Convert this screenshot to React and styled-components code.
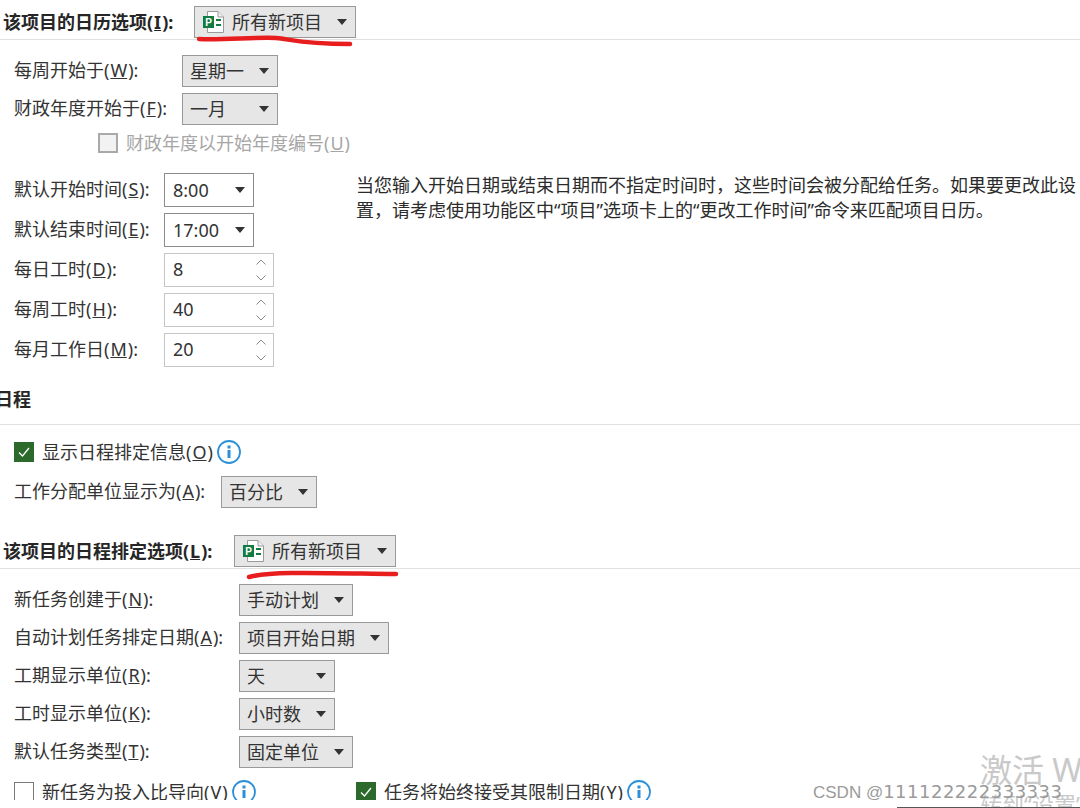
import React from 'react'
import styled, { createGlobalStyle } from 'styled-components'

const GlobalStyle = createGlobalStyle`
  html, body {
    margin: 0;
    padding: 0;
    background: #fff;
  }
`

const Page = styled.div`
  position: relative;
  width: 1080px;
  height: 808px;
  overflow: hidden;
  background: #fff;
  color: #333;
  font-family: "Noto Sans", "Noto Sans CJK SC", sans-serif;
  font-size: 18px;
  line-height: 25px;
`

const Clip = styled.div`
  height: 800px;
  overflow: hidden;
`

const SectionHead = styled.div`
  display: flex;
  align-items: ${p => (p.$plain ? 'flex-start' : 'center')};
  margin-top: ${p => p.$top || 0}px;
  padding: 0 0 1px 3px;
  border-bottom: 1px solid #e1e1e1;
  min-height: ${p => (p.$plain ? 36 : 32)}px;
`

const HeadText = styled.div`
  width: ${p => p.$w}px;
  font-weight: 700;
  color: #262626;
  margin-left: ${p => p.$shift || 0}px;
`

const Key = styled.u`
  margin: 0 1px;
`

const Group = styled.div`
  display: grid;
  grid-template-columns: ${p => p.$label}px auto;
  justify-content: start;
  align-items: center;
  row-gap: 6px;
  margin-top: ${p => p.$top || 0}px;
  padding-left: 14px;
`

const Label = styled.div`
  white-space: nowrap;
  padding-bottom: 2px;
`

const Select = styled.div`
  display: flex;
  align-items: center;
  justify-content: space-between;
  box-sizing: border-box;
  width: ${p => p.$w}px;
  height: ${p => (p.$white ? 34 : 32)}px;
  padding: 0 8px;
  background: ${p => (p.$white ? '#fff' : '#e6e6e6')};
  border: 1px solid ${p => (p.$white ? '#8c8c8c' : '#999')};
  white-space: nowrap;
`

const SelectText = styled.span`
  margin-left: ${p => (p.$white ? 0 : -1)}px;
`

const Arrow = styled.span`
  flex: none;
  width: 0;
  height: 0;
  border-left: 5px solid transparent;
  border-right: 5px solid transparent;
  border-top: 6px solid #333;
`

const SelectValue = styled.span`
  display: flex;
  align-items: center;
  gap: 8px;
`

const Spin = styled.div`
  display: flex;
  align-items: center;
  justify-content: space-between;
  box-sizing: border-box;
  width: 110px;
  height: 34px;
  padding: 0 7px 0 8px;
  background: #fff;
  border: 1px solid #c6c6c6;
`

const SpinValue = styled.span`
  padding-bottom: 2px;
`

const SpinArrows = styled.span`
  display: flex;
  flex-direction: column;
  gap: 10px;
`

const CheckRow = styled.div`
  display: flex;
  align-items: center;
  height: 20px;
  margin-top: ${p => p.$top || 0}px;
  padding-left: ${p => p.$left || 0}px;
  color: ${p => (p.$disabled ? '#a6a6a6' : '#333')};
  white-space: nowrap;
`

const Check = styled.span`
  flex: none;
  display: flex;
  align-items: center;
  justify-content: center;
  box-sizing: border-box;
  width: 20px;
  height: 20px;
  margin-right: 8px;
  background: ${p => (p.$on ? '#2b6a2b' : p.$disabled ? '#f2f2f2' : '#fff')};
  border: ${p => (p.$on ? '0' : p.$disabled ? '2px solid #a9a9a9' : '1.5px solid #7a7a7a')};
`

const InfoWrap = styled.span`
  flex: none;
  display: flex;
  margin-left: 4px;
`

const TimeArea = styled.div`
  display: flex;
  margin-top: 20px;
`

const Note = styled.div`
  position: absolute;
  width: 724px;
  margin-left: 356px;
  color: #2b2b2b;
`

const BottomChecks = styled.div`
  display: flex;
  margin-top: 14px;
  padding-left: 14px;
`

const BottomCol = styled.div`
  width: 342px;
`

const Stroke = styled.svg`
  position: absolute;
  left: 0;
  top: 0;
  pointer-events: none;
`

const Activate = styled.div`
  position: absolute;
  left: 980px;
  top: 748px;
  font-size: 32px;
  line-height: 44px;
  color: #c9c9c9;
  white-space: nowrap;
`

const ActivateSub = styled.div`
  position: absolute;
  left: 980px;
  top: 790px;
  font-size: 22px;
  line-height: 28px;
  color: #c9c9c9;
  white-space: nowrap;
`

const Credit = styled.div`
  position: absolute;
  left: 813px;
  top: 780px;
  font-family: "Liberation Sans", sans-serif;
  font-size: 17px;
  line-height: 24px;
  color: #9a9a9a;
  white-space: nowrap;
`

const CreditDigits = styled.span`
  font-family: "DejaVu Sans", sans-serif;
  font-size: 18px;
  letter-spacing: 0.5px;
`

const BottomLine = styled.div`
  position: absolute;
  left: 897px;
  right: 0;
  bottom: 0;
  height: 1px;
  background: #555;
`

const ProjectIcon = () => (
  <svg width="21" height="22" viewBox="0 0 21 22">
    <path d="M4.5 .5H15L20.5 6V21.5H4.5Z" fill="#fff" stroke="#9a9a9a" />
    <path d="M15 .5V6H20.5" fill="#f1f1f1" stroke="#9a9a9a" />
    <rect x="0" y="5" width="11" height="12" fill="#107c41" />
    <text x="5.5" y="14.5" fontSize="10" fontWeight="700" fill="#fff" textAnchor="middle" fontFamily="Liberation Sans">P</text>
    <rect x="13" y="8" width="5" height="2" fill="#107c41" />
    <rect x="13" y="13" width="5" height="2" fill="#107c41" />
  </svg>
)

const Tick = () => (
  <svg width="14" height="12" viewBox="0 0 14 12">
    <path d="M2 6.5 5.5 10 12 2" fill="none" stroke="#fff" strokeWidth="1.3" />
  </svg>
)

const Info = () => (
  <svg width="24" height="24" viewBox="0 0 24 24">
    <circle cx="12" cy="12" r="11" fill="#fff" stroke="#2b90d9" strokeWidth="1.8" />
    <rect x="10.5" y="10" width="3" height="8" fill="#2b90d9" />
    <rect x="10.5" y="5.5" width="3" height="3" fill="#2b90d9" />
  </svg>
)

const Chevron = ({ up }) => (
  <svg width="10" height="6" viewBox="0 0 10 6">
    <path d={up ? 'M.5 5.5 5 1l4.5 4.5' : 'M.5 .5 5 5l4.5-4.5'} fill="none" stroke="#888" />
  </svg>
)

const SpinField = ({ value }) => (
  <Spin>
    <SpinValue>{value}</SpinValue>
    <SpinArrows>
      <Chevron up />
      <Chevron />
    </SpinArrows>
  </Spin>
)

const ComboBox = ({ w, white, children }) => (
  <Select $w={w} $white={white}>
    <SelectText $white={white}>{children}</SelectText>
    <Arrow />
  </Select>
)

const ProjectSelect = () => (
  <Select $w={162}>
    <SelectValue>
      <ProjectIcon />
      所有新项目
    </SelectValue>
    <Arrow />
  </Select>
)

const scheduleRows = [
  ['新任务创建于(', 'N', '):', '手动计划', 114],
  ['自动计划任务排定日期(', 'A', '):', '项目开始日期', 150],
  ['工期显示单位(', 'R', '):', '天', 96],
  ['工时显示单位(', 'K', '):', '小时数', 96],
  ['默认任务类型(', 'T', '):', '固定单位', 114],
]

const spinRows = [
  ['每日工时(', 'D', '):', '8'],
  ['每周工时(', 'H', '):', '40'],
  ['每月工作日(', 'M', '):', '20'],
]

export default function App() {
  return (
    <Page lang="zh-CN">
      <GlobalStyle />
      <Clip>
        <SectionHead style={{ paddingTop: 6 }}>
          <HeadText $w={191}>该项目的日历选项(<Key>I</Key>):</HeadText>
          <ProjectSelect />
        </SectionHead>

        <Group $label={168} $top={15}>
          <Label>每周开始于(<Key>W</Key>):</Label>
          <ComboBox w={96}>星期一</ComboBox>
          <Label>财政年度开始于(<Key>F</Key>):</Label>
          <ComboBox w={96}>一月</ComboBox>
        </Group>
        <CheckRow $top={8} $left={98} $disabled>
          <Check $disabled />
          财政年度以开始年度编号(<Key>U</Key>)
        </CheckRow>

        <TimeArea>
          <Note>
            当您输入开始日期或结束日期而不指定时间时，这些时间会被分配给任务。如果要更改此设置，请考虑使用功能区中“项目”选项卡上的“更改工作时间”命令来匹配项目日历。
          </Note>
          <Group $label={150}>
            <Label>默认开始时间(<Key>S</Key>):</Label>
            <ComboBox w={90} white>8:00</ComboBox>
            <Label>默认结束时间(<Key>E</Key>):</Label>
            <ComboBox w={90} white>17:00</ComboBox>
            {spinRows.map(([a, key, b, value]) => (
              <React.Fragment key={key}>
                <Label>{a}<Key>{key}</Key>{b}</Label>
                <SpinField value={value} />
              </React.Fragment>
            ))}
          </Group>
        </TimeArea>

        <SectionHead $top={20} $plain>
          <HeadText $shift={-8}>日程</HeadText>
        </SectionHead>
        <CheckRow $top={17} $left={14}>
          <Check $on><Tick /></Check>
          显示日程排定信息(<Key>O</Key>)
          <InfoWrap><Info /></InfoWrap>
        </CheckRow>
        <Group $label={207} $top={14}>
          <Label>工作分配单位显示为(<Key>A</Key>):</Label>
          <ComboBox w={96}>百分比</ComboBox>
        </Group>

        <SectionHead $top={27}>
          <HeadText $w={231}>该项目的日程排定选项(<Key>L</Key>):</HeadText>
          <ProjectSelect />
        </SectionHead>
        <Group $label={225} $top={15}>
          {scheduleRows.map(([a, key, b, value, w]) => (
            <React.Fragment key={key}>
              <Label>{a}<Key>{key}</Key>{b}</Label>
              <ComboBox w={w}>{value}</ComboBox>
            </React.Fragment>
          ))}
        </Group>
        <BottomChecks>
          <BottomCol>
            <CheckRow>
              <Check />
              新任务为投入比导向(<Key>V</Key>)
              <InfoWrap><Info /></InfoWrap>
            </CheckRow>
          </BottomCol>
          <CheckRow>
            <Check $on><Tick /></Check>
            任务将始终接受其限制日期(<Key>Y</Key>)
            <InfoWrap><Info /></InfoWrap>
          </CheckRow>
        </BottomChecks>
      </Clip>

      <Stroke width="1080" height="808" viewBox="0 0 1080 808">
        <path d="M199 39C225 40 255 37 276 38C290 39 300 44 350 44" fill="none" stroke="#e81e1e" strokeWidth="4.5" strokeLinecap="round" />
        <path d="M249 577C270 571 320 573 396 574" fill="none" stroke="#e81e1e" strokeWidth="4.5" strokeLinecap="round" />
      </Stroke>

      <Activate>激活 W</Activate>
      <ActivateSub>转到“设置”以激活</ActivateSub>
      <Credit>CSDN @<CreditDigits>111122222333333</CreditDigits></Credit>
      <BottomLine />
    </Page>
  )
}
